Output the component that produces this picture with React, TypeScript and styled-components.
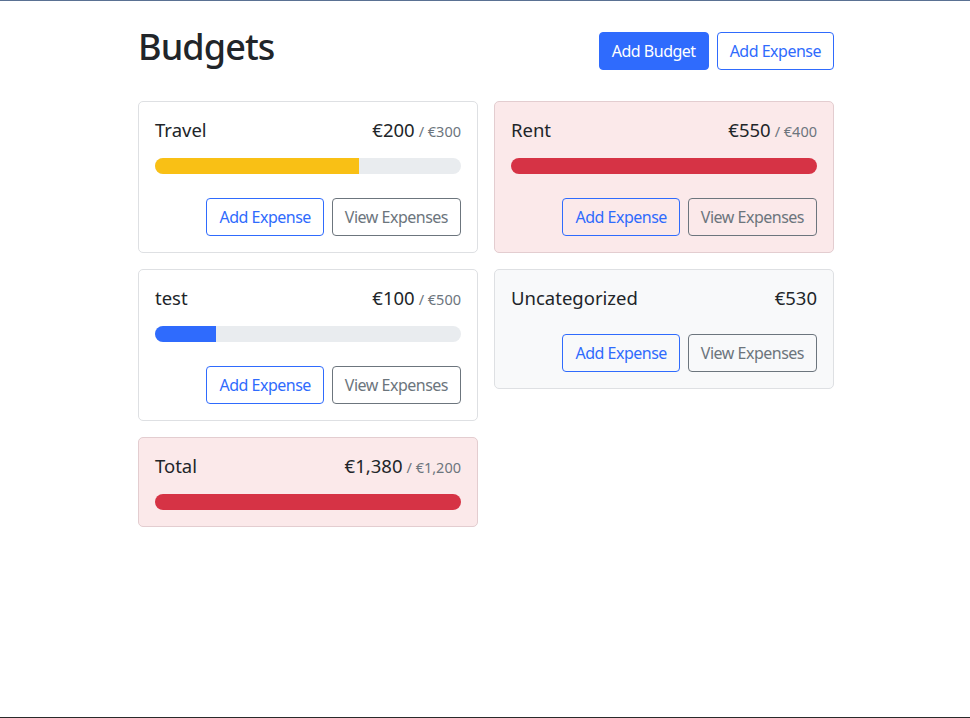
import React from "react";
import styled, { createGlobalStyle } from "styled-components";

const Global = createGlobalStyle`
  *, *::before, *::after { box-sizing: border-box; }
  html, body { margin: 0; padding: 0; }
  body {
    font-family: "Noto Sans", "Open Sans", sans-serif;
    color: #212529;
    background: #fff;
  }
`;

const Page = styled.div`
  min-height: 718px;
  border-top: 1px solid #5a7193;
  border-bottom: 1px solid #2a2a2a;
  display: flex;
  flex-direction: column;
  align-items: center;
`;

const Container = styled.div`
  width: 720px;
  padding: 0 11px 0 13px;
  margin-top: 24px;
`;

const Header = styled.div`
  display: flex;
  align-items: center;
  gap: 8px;
  margin-bottom: 25px;
`;

const Title = styled.h1`
  margin: 0 auto 8px 0;
  font-size: 36px;
  font-weight: 500;
  line-height: 1.2;
  letter-spacing: -0.9px;
`;

const Button = styled.button<{ $variant: "primary" | "outline-primary" | "outline-secondary" }>`
  font-family: inherit;
  font-size: 16px;
  letter-spacing: -0.5px;
  line-height: 1.5;
  height: 38px;
  padding: 0 12px;
  border-radius: 4px;
  border: 1px solid
    ${(p) => (p.$variant === "outline-secondary" ? "#6c757d" : "#2f6bfd")};
  background: ${(p) => (p.$variant === "primary" ? "#2f6bfd" : "transparent")};
  color: ${(p) =>
    p.$variant === "primary" ? "#fff" : p.$variant === "outline-primary" ? "#2f6bfd" : "#6c757d"};
  cursor: pointer;
  white-space: nowrap;
`;

const Grid = styled.div`
  display: grid;
  grid-template-columns: repeat(2, 1fr);
  gap: 16px;
  align-items: start;
`;

const Card = styled.div<{ $tone: "default" | "danger" | "light" }>`
  border: 1px solid
    ${(p) => (p.$tone === "danger" ? "#e3cdd0" : "#dee0e3")};
  border-radius: 5px;
  background: ${(p) =>
    p.$tone === "danger" ? "#fbe9ea" : p.$tone === "light" ? "#f8f9fa" : "#fff"};
  padding: 16px;
`;

const CardTitle = styled.div`
  display: flex;
  justify-content: space-between;
  align-items: baseline;
  font-size: 18.5px;
  line-height: 1.3;
  margin-bottom: 16px;
`;

const Amount = styled.div`
  display: flex;
  align-items: baseline;
`;

const Max = styled.span`
  font-size: 14.5px;
  color: #6c757d;
  margin-left: 4px;
`;

const Track = styled.div`
  height: 16px;
  border-radius: 999px;
  background: #e9ecef;
  overflow: hidden;
`;

const Fill = styled.div<{ $color: string }>`
  height: 100%;
  background: ${(p) => p.$color};
`;

const Actions = styled.div`
  display: flex;
  justify-content: flex-end;
  gap: 8px;
  margin-top: 24px;
`;

const fmt = (n: number) => "€" + n.toLocaleString("en-US");

function barColor(amount: number, max: number) {
  const r = amount / max;
  if (r < 0.5) return "#2f6bfd";
  if (r < 0.75) return "#f9c015";
  return "#d63345";
}

function BudgetCard({
  name,
  amount,
  max,
  gray,
  hideButtons,
}: {
  name: string;
  amount: number;
  max?: number;
  gray?: boolean;
  hideButtons?: boolean;
}) {
  const over = max !== undefined && amount > max;
  const tone = over ? "danger" : gray ? "light" : "default";
  return (
    <Card $tone={tone}>
      <CardTitle>
        <span>{name}</span>
        <Amount>
          {fmt(amount)}
          {max !== undefined && <Max>/ {fmt(max)}</Max>}
        </Amount>
      </CardTitle>
      {max !== undefined && (
        <Track>
          <Fill
            $color={barColor(amount, max)}
            style={{ width: `${Math.min(100, (amount / max) * 100)}%` }}
          />
        </Track>
      )}
      {!hideButtons && (
        <Actions>
          <Button $variant="outline-primary">Add Expense</Button>
          <Button $variant="outline-secondary">View Expenses</Button>
        </Actions>
      )}
    </Card>
  );
}

export default function App() {
  return (
    <>
      <Global />
      <Page>
        <Container>
          <Header>
            <Title>Budgets</Title>
            <Button $variant="primary">Add Budget</Button>
            <Button $variant="outline-primary">Add Expense</Button>
          </Header>
          <Grid>
            <BudgetCard name="Travel" amount={200} max={300} />
            <BudgetCard name="Rent" amount={550} max={400} />
            <BudgetCard name="test" amount={100} max={500} />
            <BudgetCard name="Uncategorized" amount={530} gray />
            <BudgetCard name="Total" amount={1380} max={1200} hideButtons />
          </Grid>
        </Container>
      </Page>
    </>
  );
}
